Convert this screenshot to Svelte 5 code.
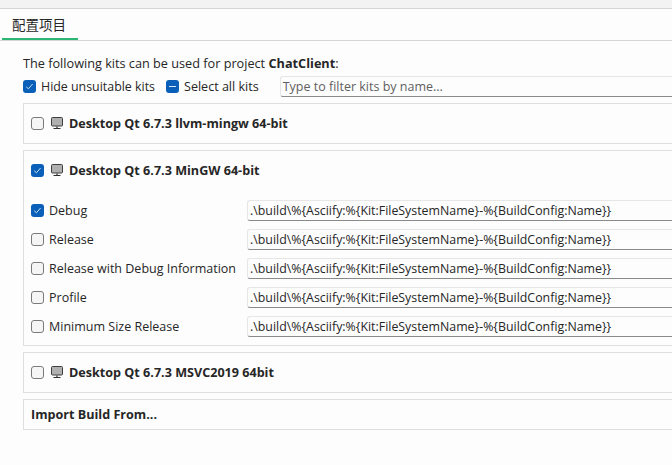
<script>
  const configs = [
    { name: "Debug", checked: true },
    { name: "Release", checked: false },
    { name: "Release with Debug Information", checked: false },
    { name: "Profile", checked: false },
    { name: "Minimum Size Release", checked: false },
  ];
  const buildPath = ".\\build\\%{Asciify:%{Kit:FileSystemName}-%{BuildConfig:Name}}";
</script>

{#snippet box(state)}
  <span class="box {state}">
    {#if state === "on"}
      <svg width="9" height="9" viewBox="0 0 9 9"><path d="M1.2 4.8 3.4 6.8 7.6 2" fill="none" stroke="#c4dcf3" stroke-width="1" /></svg>
    {:else if state === "partial"}
      <span class="dash"></span>
    {/if}
  </span>
{/snippet}

{#snippet monitor()}
  <svg class="monitor" width="13" height="13" viewBox="0 0 13 13">
    <rect x="0.5" y="0.5" width="11" height="8.5" rx="1" fill="#b0b0b0" stroke="#3e3e3e" />
    <path d="M6 9.5v2M2.5 11.5h7" stroke="#2e2e2e" stroke-width="1.2" fill="none" />
  </svg>
{/snippet}

{#snippet kitHead(state, name)}
  <div class="kit-head">
    {@render box(state)}
    {@render monitor()}
    <span class="kit-name">{name}</span>
  </div>
{/snippet}

<main>
  <div class="topband"></div>
  <div class="tabs">
    <div class="tab">配置项目</div>
  </div>

  <div class="content">
    <p class="intro">The following kits can be used for project <b>ChatClient</b>:</p>

    <div class="filters">
      <label class="check">{@render box("on")} Hide unsuitable kits</label>
      <label class="check all">{@render box("partial")} Select all kits</label>
      <div class="field filter">Type to filter kits by name...</div>
    </div>

    <section class="card kit1">
      {@render kitHead("off", "Desktop Qt 6.7.3 llvm-mingw 64-bit")}
    </section>

    <section class="card kit2">
      {@render kitHead("on", "Desktop Qt 6.7.3 MinGW 64-bit")}
      <div class="configs">
        {#each configs as c}
          <div class="config">
            <label class="check">{@render box(c.checked ? "on" : "off")} {c.name}</label>
            <div class="field path">{buildPath}</div>
          </div>
        {/each}
      </div>
    </section>

    <section class="card kit3">
      {@render kitHead("off", "Desktop Qt 6.7.3 MSVC2019 64bit")}
    </section>

    <section class="card import">Import Build From...</section>
  </div>
</main>

<style>
  :global(body) {
    margin: 0;
    background: #fdfdfd;
    overflow: hidden;
  }

  main {
    width: 672px;
    height: 465px;
    overflow: hidden;
    font-family: "Open Sans", "Noto Sans CJK SC", sans-serif;
    font-size: 12.5px;
    color: #262626;
  }

  .topband {
    height: 8px;
    background: #f3f3f3;
    border-bottom: 1px solid #d6d6d6;
  }

  .tabs {
    height: 31px;
    border-bottom: 1px solid #d6d6d6;
    padding-left: 2px;
  }

  .tab {
    box-sizing: border-box;
    width: 76px;
    height: 31px;
    padding: 7px 0 0 10px;
    font-family: "Noto Sans CJK SC", sans-serif;
    font-size: 13.5px;
    line-height: 17px;
    border-bottom: 2px solid #2bb673;
  }

  .content {
    padding-left: 23px;
  }

  .intro {
    margin: 0;
    padding-top: 13px;
    line-height: 18px;
    font-size: 12.7px;
    white-space: nowrap;
  }

  .filters {
    display: flex;
    align-items: center;
    height: 23px;
    margin-top: 3px;
    font-size: 12.4px;
    white-space: nowrap;
  }

  .filters .check + .check {
    margin-left: 11px;
  }

  .filters .all {
    font-size: 12.55px;
  }

  .check {
    display: flex;
    align-items: center;
    gap: 5px;
  }

  .box {
    box-sizing: border-box;
    flex: none;
    display: flex;
    align-items: center;
    justify-content: center;
    width: 13px;
    height: 13px;
    border-radius: 3px;
  }

  .box.off {
    background: #f5f5f5;
    border: 1px solid #7a7a7a;
  }

  .box.on,
  .box.partial {
    background: #0a5fb8;
  }

  .dash {
    width: 7px;
    height: 1.5px;
    background: #d5e5f6;
  }

  .field {
    box-sizing: border-box;
    background: #fdfdfd;
    border: 1px solid #e6e6e6;
    border-bottom: 1px solid #8a8a8a;
    border-right: 0;
    border-radius: 3px 0 0 3px;
    white-space: nowrap;
    overflow: hidden;
  }

  .filter {
    width: 400px;
    height: 21px;
    margin-left: 21px;
    padding-left: 2px;
    font-size: 12.5px;
    line-height: 19px;
    color: #5f5f5f;
  }

  .card {
    box-sizing: border-box;
    width: 660px;
    border: 1px solid #dedede;
    border-right: 0;
  }

  .kit1 {
    height: 41px;
    margin-top: 5px;
  }

  .kit2 {
    height: 196px;
    margin-top: 6px;
  }

  .kit3 {
    height: 41px;
    margin-top: 6px;
  }

  .kit-head {
    display: flex;
    align-items: center;
    height: 39px;
    padding-left: 7px;
    font-size: 12.6px;
    font-weight: 700;
  }

  .kit-head .monitor {
    margin-left: 7px;
    margin-right: 5px;
  }

  .configs {
    padding: 6px 0 0 7px;
  }

  .config {
    display: flex;
    align-items: center;
    height: 29px;
  }

  .config .check {
    width: 216px;
    white-space: nowrap;
  }

  .path {
    flex: 1;
    height: 21px;
    padding-left: 2px;
    font-size: 12.36px;
    line-height: 19px;
  }

  .import {
    height: 31px;
    margin-top: 6px;
    padding-left: 7px;
    font-size: 12.6px;
    line-height: 29px;
    font-weight: 700;
  }
</style>
